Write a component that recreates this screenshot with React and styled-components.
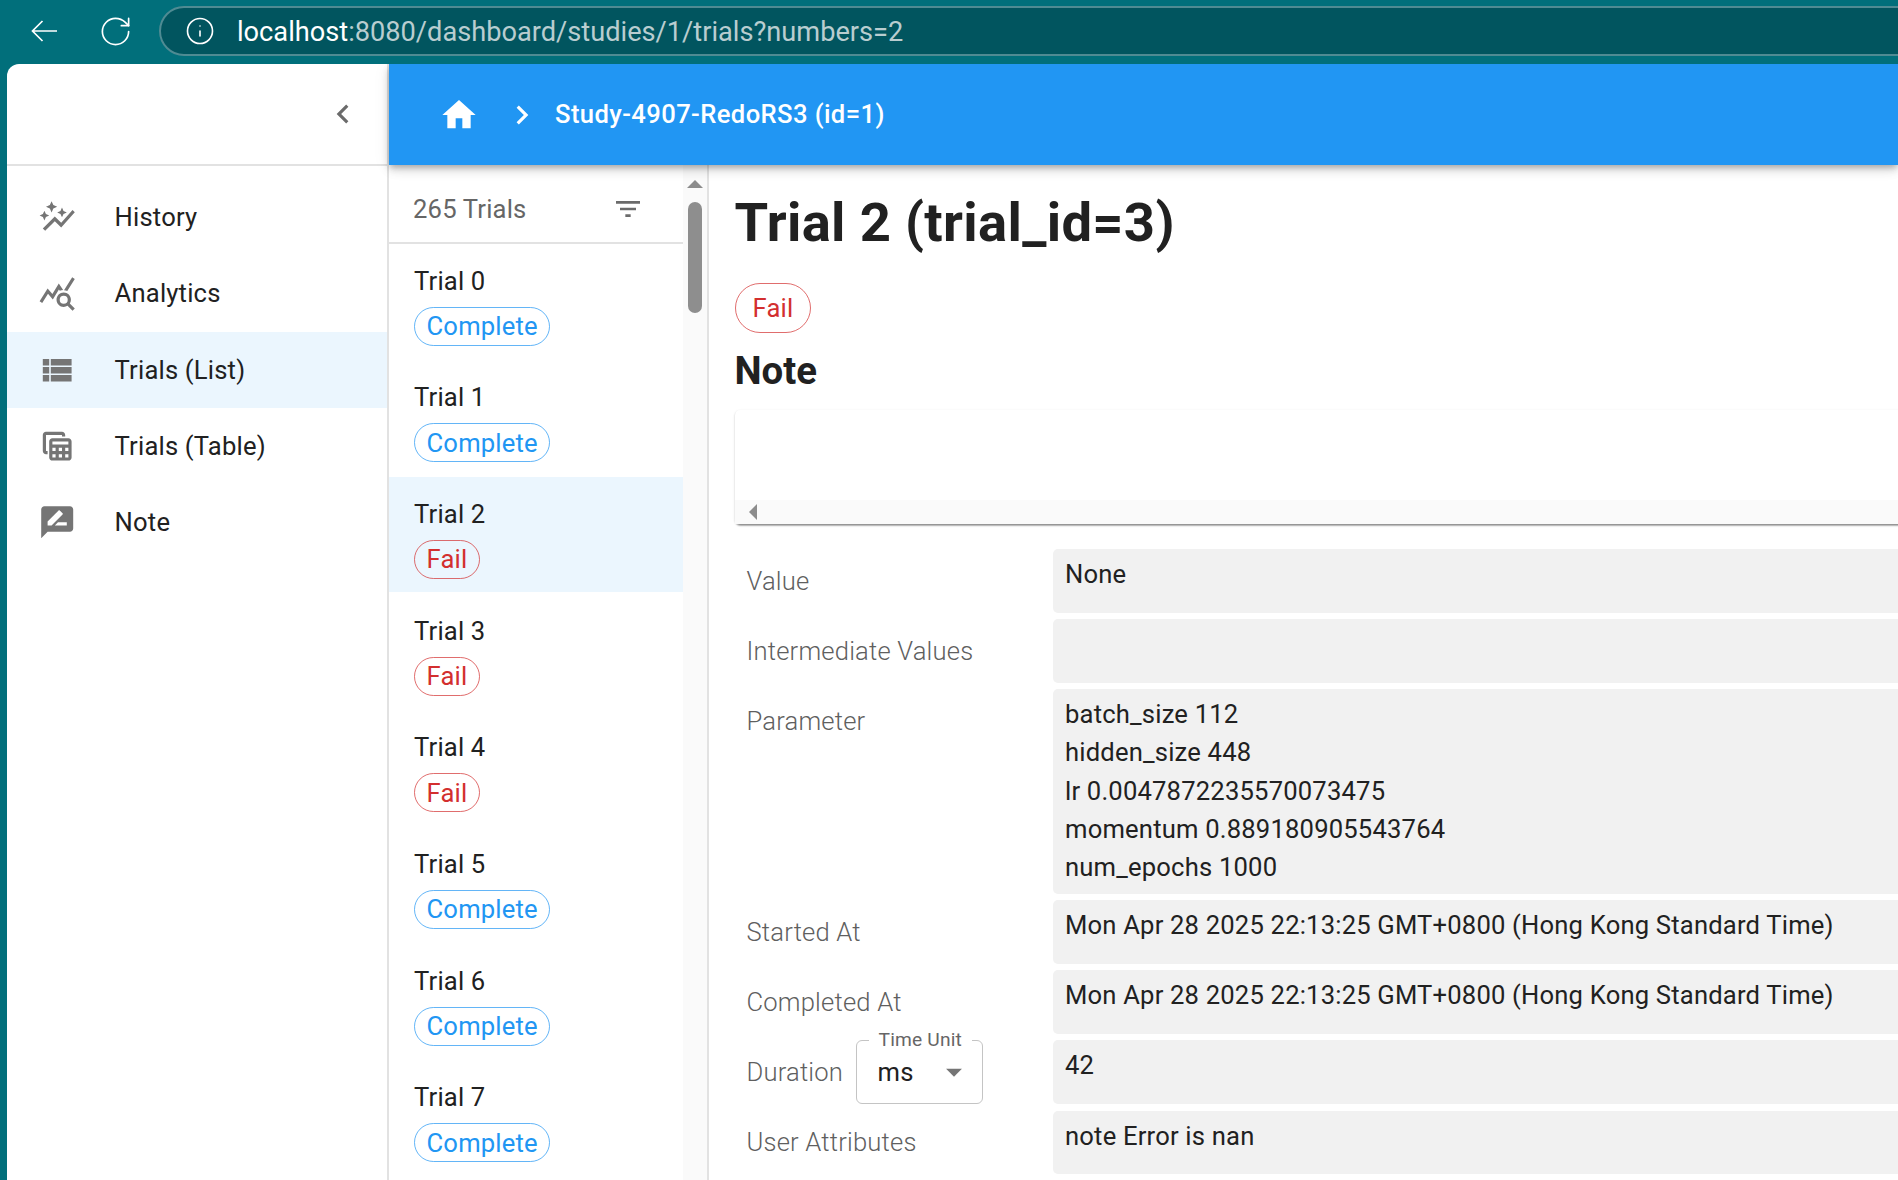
import React from "react";
import styled, { createGlobalStyle } from "styled-components";
import { RotateCw, Info } from "lucide-react";
import {
  MdAutoGraph, MdQueryStats, MdViewList, MdTableView, MdRateReview,
  MdHome, MdChevronLeft, MdChevronRight, MdFilterList, MdArrowDropDown,
} from "react-icons/md";

const Global = createGlobalStyle`
  html, body { margin: 0; padding: 0; background: #006e7a; }
  * { box-sizing: border-box; }
  body { font-family: Roboto, "Liberation Sans", sans-serif; letter-spacing: .19px; }
`;

const Page = styled.div`
  width: 1898px; height: 1180px; overflow: hidden;
  display: flex; flex-direction: column; background: #016f7b;
`;
const Chrome = styled.header`
  height: 64px; flex: none; display: flex; align-items: flex-start;
  padding: 6px 0 0 30px; color: #fff;
`;
const ChromeButton = styled.div`
  width: 28px; height: 50px; display: flex; align-items: center; justify-content: center;
  margin-right: ${(p) => p.$gap}px; flex: none;
  svg { flex: none; }
`;
const AddressPill = styled.div`
  flex: 1; height: 50px; margin-right: -40px; display: flex; align-items: center;
  background: #01555f; border: 2px solid #4f8b93; border-radius: 25px;
  padding-left: 24px;
`;
const Url = styled.span`
  margin: 2px 0 0 22px; font-size: 27.2px; letter-spacing: 0; color: #b9cdd0; white-space: nowrap;
  b { font-weight: 400; color: #fff; }
`;
const Desk = styled.div`flex: 1; min-height: 0; padding-left: 7px; display: flex;`;
const Window = styled.div`
  flex: 1; min-width: 0; display: flex; background: #fff;
  border-top-left-radius: 12px; overflow: hidden;
`;
const Sidebar = styled.aside`
  width: 382px; flex: none; border-right: 2px solid #e2e2e2; display: flex; flex-direction: column;
`;
const SideHead = styled.div`
  height: 102px; flex: none; border-bottom: 2px solid #e2e2e2; display: flex;
  align-items: center; justify-content: flex-end; padding-right: 25px;
  color: #6b6b6b; font-size: 38px;
  svg { display: block; }
`;
const NavList = styled.nav`padding-top: 13px;`;
const NavItem = styled.div`
  height: 76.3px; display: flex; align-items: center; padding-left: 31px;
  background: ${(p) => (p.$active ? "#ebf6fe" : "transparent")};
  font-size: 25.6px; color: #212121;
  svg { width: 38.4px; height: 38.4px; color: #757575; flex: none; margin-right: 38.2px; }
`;
const Main = styled.div`flex: 1; min-width: 0; display: flex; flex-direction: column;`;
const AppBar = styled.div`
  height: 101px; flex: none; background: #2196f3; color: #fff; display: flex; align-items: center;
  padding-left: 50px; position: relative; z-index: 2;
  box-shadow: 0 3px 6px -1px rgba(0,0,0,.25), 0 6px 9px rgba(0,0,0,.1), 0 2px 16px rgba(0,0,0,.08);
  svg { flex: none; }
`;
const StudyTitle = styled.span`
  font-size: 25.6px; font-weight: 500; margin: -2px 0 0 14px; letter-spacing: .4px; white-space: nowrap;
`;
const ChevronWrap = styled.span`display: flex; margin-left: 24px;`;
const Body = styled.div`flex: 1; min-height: 0; display: flex;`;
const ListPane = styled.section`
  width: 294px; flex: none; display: flex; flex-direction: column; overflow: hidden;
`;
const ListHead = styled.div`
  height: 78.5px; flex: none; border-bottom: 2px solid #e2e2e2; display: flex; align-items: center;
  justify-content: space-between; padding: 11px 39px 0 24px; color: #666; font-size: 25.6px;
  svg { width: 32px; height: 32px; color: #6b6b6b; display: block; }
`;
const TrialRow = styled.div`
  height: 115px; margin-bottom: 1.7px; flex: none; padding: 19px 0 0 25px;
  background: ${(p) => (p.$active ? "#ebf6fe" : "transparent")};
`;
const TrialName = styled.div`font-size: 25.6px; line-height: 36px; color: #212121;`;
const Chip = styled.span`
  display: inline-flex; align-items: center; justify-content: center;
  height: ${(p) => (p.$large ? 50 : 39)}px;
  padding: 0 ${(p) => (p.$large ? 17 : 11.5)}px;
  border-radius: 26px; font-size: 25.6px;
  border: 1.5px solid ${(p) => (p.$fail ? "rgba(211,47,47,.7)" : "rgba(33,150,243,.7)")};
  color: ${(p) => (p.$fail ? "#d32f2f" : "#2196f3")};
`;
const SmallChipRow = styled.div`margin-top: 8px; display: flex;`;
const ScrollTrack = styled.div`
  width: 24px; flex: none; background: #fafafa; display: flex; flex-direction: column;
  align-items: center; padding-top: 15px;
`;
const ArrowUp = styled.div`
  width: 0; height: 0; border-left: 8px solid transparent; border-right: 8px solid transparent;
  border-bottom: 8px solid #8c8c8c;
`;
const Thumb = styled.div`width: 14px; height: 111px; border-radius: 7px; background: #8e8e8e; margin-top: 14px;`;
const Detail = styled.main`
  flex: 1; min-width: 0; border-left: 2px solid #e2e2e2; padding: 24px 0 0 25.5px; overflow: hidden;
`;
const Title = styled.h1`
  margin: 0; font-size: 54.4px; line-height: 67px; font-weight: 700; letter-spacing: .32px;
  color: #212121; white-space: nowrap;
`;
const StatusLine = styled.div`margin-top: 27px; display: flex;`;
const NoteHeading = styled.h2`
  margin: 13px 0 0; font-size: 38.4px; line-height: 50px; font-weight: 700; letter-spacing: 0; color: #212121;
`;
const NoteBox = styled.div`
  margin: 14px -40px 0 0; height: 114px; border-radius: 5px; display: flex; flex-direction: column;
  justify-content: flex-end; background: #fff;
  box-shadow: 0 3px 2px -2px rgba(0,0,0,.3), 0 1.5px 1.5px rgba(0,0,0,.2), 0 1px 3px rgba(0,0,0,.1);
`;
const NoteScroll = styled.div`
  height: 24px; background: #fafafa; display: flex; align-items: center; padding-left: 14px;
`;
const ArrowLeftTri = styled.div`
  width: 0; height: 0; border-top: 8px solid transparent; border-bottom: 8px solid transparent;
  border-right: 8px solid #8c8c8c;
`;
const Rows = styled.div`margin: 25px -40px 0 0; display: flex; flex-direction: column; gap: 6.6px;`;
const Row = styled.div`display: flex; align-items: flex-start;`;
const RowLabel = styled.div`
  width: 318.5px; flex: none; height: 63.5px; padding: 0 70.5px 0 12px; display: flex; align-items: center;
  font-size: 25.6px; font-weight: 300; color: #5f5f5f; white-space: nowrap;
`;
const RowValue = styled.div`
  flex: 1; min-height: 63.5px; background: #f1f1f1; border-radius: 5px; padding: 6px 12px 7px;
  font-size: 25.6px; line-height: 38.3px; color: #212121; white-space: pre-line;
`;
const SelectBox = styled.div`
  position: relative; width: 127px; height: 63.5px; margin-left: auto; flex: none; border: 1.5px solid #c4c4c4;
  border-radius: 6px; display: flex; align-items: center; justify-content: space-between;
  padding: 0 9px 0 21px; font-size: 25.6px; font-weight: 400; color: #212121;
  svg { width: 38px; height: 38px; color: #757575; margin-right: 0; }
`;
const SelectCaption = styled.span`
  position: absolute; top: -12px; left: 12px; padding: 0 10px; background: #fff;
  font-size: 19.2px; line-height: 22px; color: #666; white-space: nowrap;
`;

const nav = [
  ["History", MdAutoGraph], ["Analytics", MdQueryStats], ["Trials (List)", MdViewList, true],
  ["Trials (Table)", MdTableView], ["Note", MdRateReview],
];
const trials = [
  ["Trial 0"], ["Trial 1"], ["Trial 2", true, true], ["Trial 3", true], ["Trial 4", true],
  ["Trial 5"], ["Trial 6"], ["Trial 7"],
];
const date = "Mon Apr 28 2025 22:13:25 GMT+0800 (Hong Kong Standard Time)";

export default function App() {
  return (
    <Page>
      <Global />
      <Chrome>
        <ChromeButton $gap={43}>
          <svg width="28" height="24" viewBox="0 0 28 24" fill="none" stroke="currentColor" strokeWidth="1.7">
            <path d="M27 12H2.5M12.5 2 2.5 12l10 10" />
          </svg>
        </ChromeButton>
        <ChromeButton $gap={30}><RotateCw size={35} strokeWidth={1.15} /></ChromeButton>
        <AddressPill>
          <Info size={30} strokeWidth={1.3} />
          <Url><b>localhost</b>:8080/dashboard/studies/1/trials?numbers=2</Url>
        </AddressPill>
      </Chrome>
      <Desk>
        <Window>
          <Sidebar>
            <SideHead><MdChevronLeft /></SideHead>
            <NavList>
              {nav.map(([label, Icon, active]) => (
                <NavItem key={label} $active={active}><Icon />{label}</NavItem>
              ))}
            </NavList>
          </Sidebar>
          <Main>
            <AppBar>
              <MdHome size={40} />
              <ChevronWrap><MdChevronRight size={38} /></ChevronWrap>
              <StudyTitle>Study-4907-RedoRS3 (id=1)</StudyTitle>
            </AppBar>
            <Body>
              <ListPane>
                <ListHead>265 Trials<MdFilterList /></ListHead>
                {trials.map(([name, fail, active]) => (
                  <TrialRow key={name} $active={active}>
                    <TrialName>{name}</TrialName>
                    <SmallChipRow><Chip $fail={fail}>{fail ? "Fail" : "Complete"}</Chip></SmallChipRow>
                  </TrialRow>
                ))}
              </ListPane>
              <ScrollTrack><ArrowUp /><Thumb /></ScrollTrack>
              <Detail>
                <Title>Trial 2 (trial_id=3)</Title>
                <StatusLine><Chip $large $fail>Fail</Chip></StatusLine>
                <NoteHeading>Note</NoteHeading>
                <NoteBox><NoteScroll><ArrowLeftTri /></NoteScroll></NoteBox>
                <Rows>
                  <Row><RowLabel>Value</RowLabel><RowValue>None</RowValue></Row>
                  <Row><RowLabel>Intermediate Values</RowLabel><RowValue /></Row>
                  <Row>
                    <RowLabel>Parameter</RowLabel>
                    <RowValue>{"batch_size 112\nhidden_size 448\nlr 0.0047872235570073475\nmomentum 0.889180905543764\nnum_epochs 1000"}</RowValue>
                  </Row>
                  <Row><RowLabel>Started At</RowLabel><RowValue>{date}</RowValue></Row>
                  <Row><RowLabel>Completed At</RowLabel><RowValue>{date}</RowValue></Row>
                  <Row>
                    <RowLabel>
                      Duration
                      <SelectBox>
                        <SelectCaption>Time Unit</SelectCaption>
                        ms
                        <MdArrowDropDown />
                      </SelectBox>
                    </RowLabel>
                    <RowValue>42</RowValue>
                  </Row>
                  <Row><RowLabel>User Attributes</RowLabel><RowValue>note Error is nan</RowValue></Row>
                </Rows>
              </Detail>
            </Body>
          </Main>
        </Window>
      </Desk>
    </Page>
  );
}
